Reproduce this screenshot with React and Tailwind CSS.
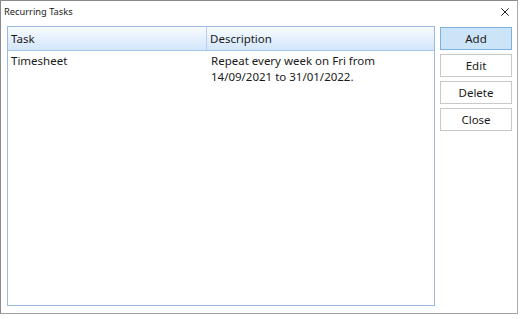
export default function App() {
  const font = { fontFamily: '"Noto Sans", "Open Sans", sans-serif' };
  const btn = "w-[72px] h-[23px] border flex items-center justify-center text-[11.5px] leading-none";
  return (
    <div className="w-[523px] h-[319px] bg-white" style={font}>
      <div className="w-[518px] h-[314px] border border-[#8a8a8a] border-b-[#a0a0a0] border-r-[#a8a8a8] bg-white flex flex-col text-[#1a1a1a]">
        <div className="h-[25px] flex items-center justify-between pl-[3px] pr-[8px] shrink-0">
          <span className="text-[9.3px] leading-none -mt-[3px]">Recurring Tasks</span>
          <svg width="8" height="8" viewBox="0 0 8 8" className="-mt-[4px]">
            <path d="M0.3 0.3 L7.7 7.7 M7.7 0.3 L0.3 7.7" stroke="#222" strokeWidth="1" fill="none" />
          </svg>
        </div>
        <div className="flex pl-[6px] gap-[5px]">
          <div className="w-[428px] h-[280px] border border-[#99b9e3] flex flex-col">
            <div className="h-[24px] flex bg-gradient-to-b from-[#f7fbff] to-[#d3e6fb] border-b border-[#a6c5ea] text-[11.5px] leading-none">
              <div className="w-[199px] border-r border-[#b7cfeb] flex items-center pl-[3px] pt-[1px]">Task</div>
              <div className="flex-1 flex items-center pl-[3px] pt-[1px]">Description</div>
            </div>
            <div className="flex text-[11.5px] leading-[16px] pt-[2px]">
              <div className="w-[199px] pl-[3px]">Timesheet</div>
              <div className="flex-1 pl-[4px]">
                <div>Repeat every week on Fri from</div>
                <div>14/09/2021 to 31/01/2022.</div>
              </div>
            </div>
          </div>
          <div className="flex flex-col gap-[4px] pt-[1px]">
            <div className={btn + " border-[#7fb0e0] bg-[#cce4f7]"}>Add</div>
            <div className={btn + " border-[#c8c8c8] bg-white"}>Edit</div>
            <div className={btn + " border-[#c8c8c8] bg-white"}>Delete</div>
            <div className={btn + " border-[#c8c8c8] bg-white"}>Close</div>
          </div>
        </div>
      </div>
    </div>
  );
}
